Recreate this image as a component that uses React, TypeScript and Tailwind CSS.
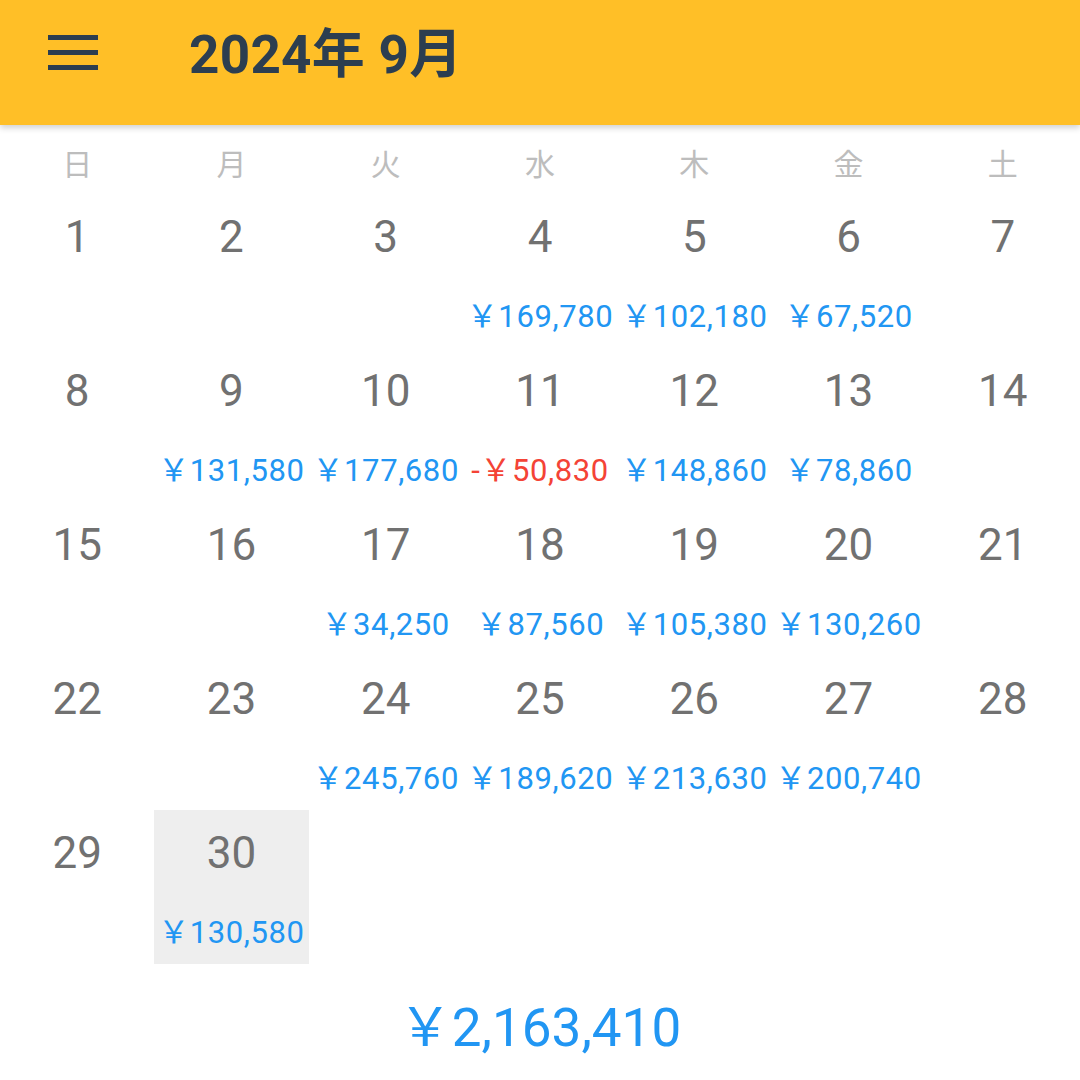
import React from 'react';

type Day = { day: number; amount?: number; selected?: boolean };

const weekdays = ['日', '月', '火', '水', '木', '金', '土'];

const amounts: Record<number, number> = {
  4: 169780,
  5: 102180,
  6: 67520,
  9: 131580,
  10: 177680,
  11: -50830,
  12: 148860,
  13: 78860,
  17: 34250,
  18: 87560,
  19: 105380,
  20: 130260,
  24: 245760,
  25: 189620,
  26: 213630,
  27: 200740,
  30: 130580,
};

const days: Day[] = Array.from({ length: 30 }, (_, i) => ({
  day: i + 1,
  amount: amounts[i + 1],
  selected: i + 1 === 30,
}));

const yen = (n: number) => (n < 0 ? '-￥' : '￥') + Math.abs(n).toLocaleString('en-US');

function MenuIcon() {
  return (
    <svg width="50" height="35" viewBox="0 0 50 35" className="block">
      <rect x="0" y="0" width="50" height="5" fill="#2c3e50" />
      <rect x="0" y="15" width="50" height="5" fill="#2c3e50" />
      <rect x="0" y="30" width="50" height="5" fill="#2c3e50" />
    </svg>
  );
}

export default function App() {
  const total = Object.values(amounts).reduce((a, b) => a + b, 0);

  return (
    <div className="h-[1080px] w-[1080px] overflow-hidden bg-white" style={{ fontFamily: 'Roboto, "Noto Sans CJK JP", sans-serif' }}>
      <header className="relative z-10 flex h-[125px] items-center bg-[#ffbf27] shadow-[0_3px_6px_rgba(0,0,0,0.18)]">
        <div className="ml-[48px] mb-[20px]">
          <MenuIcon />
        </div>
        <h1 className="ml-[91px] mb-[14px] text-[53px] font-bold leading-none tracking-[0.3px] text-[#2c3e50]">2024年 9月</h1>
      </header>

      <div className="grid grid-cols-7">
        {weekdays.map((w) => (
          <div key={w} className="flex h-[69px] items-center justify-center pt-[10px] text-[30px] leading-none text-[#bdbdbd]">
            {w}
          </div>
        ))}
        {days.map((d) => (
          <div key={d.day} className={`flex h-[154px] flex-col items-center ${d.selected ? 'bg-[#eeeeee]' : ''}`}>
            <div className="pt-[21px] text-[44px] leading-none text-[#717171]">{d.day}</div>
            {d.amount !== undefined && (
              <div className={`mt-[42px] whitespace-nowrap text-[31px] leading-none tracking-[0.6px] ${d.amount < 0 ? 'text-[#f44336]' : 'text-[#2196f3]'}`}>
                {yen(d.amount)}
              </div>
            )}
          </div>
        ))}
      </div>

      <div className="flex justify-center pt-[38px] text-[53px] leading-none text-[#2196f3]">{yen(total)}</div>
    </div>
  );
}
